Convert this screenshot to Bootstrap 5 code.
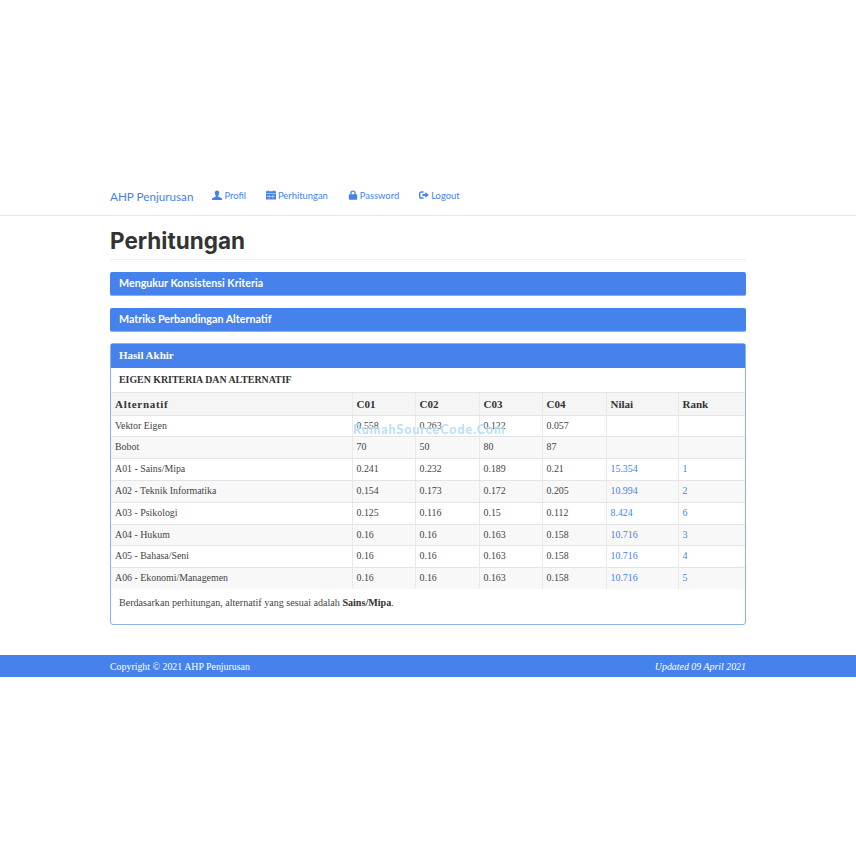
<!DOCTYPE html>
<html lang="en">
<head>
  <meta charset="UTF-8" />
  <meta name="viewport" content="width=device-width, initial-scale=1.0"/>
  <title>AHP Penjurusan</title>
  <link href="https://cdn.jsdelivr.net/npm/bootstrap@5.3.2/dist/css/bootstrap.min.css" rel="stylesheet">
  <style>
    body { padding-top: 180px; font-family: "Liberation Serif", serif; font-size: 10px; color: #444; background: #fff; }
    .wrap { width: 636px; margin-left: 110px; }
    .top-bar { height: 36px; border-bottom: 1px solid #e7e7e7; font-family: Lato, sans-serif; }
    .top-bar .wrap { margin-bottom: 2px; }
    .brand { font-size: 11.7px; color: #4582ec; margin-right: 19px; }
    .nav-item-link { font-size: 9.4px; color: #4582ec; margin-right: 20px; text-decoration: none; gap: 2px; }
    .nav-item-link svg { fill: #4582ec; width: 10px; height: 10px; margin-bottom: 2px; }
    .page-title { font-family: Inter, sans-serif; font-weight: 700; font-size: 22.5px; line-height: 26px; color: #333; margin: 12px 0 0; padding-bottom: 5px; border-bottom: 1px solid #eee; }
    .bar-panel { height: 24px; background: #4582ec; border-radius: 2px; border-bottom: 1px solid #8aafef; color: #fff; font-family: Lato, sans-serif; font-weight: 700; font-size: 10.7px; padding-left: 9px; line-height: 22px; }
    .first-bar { margin-top: 12px; }
    .next-bar { margin-top: 12px; }
    .result-panel { margin-top: 11px; border: 1px solid #8cb0ec; border-radius: 3px; height: 282px; position: relative; }
    .result-head { height: 24px; background: #4582ec; color: #fff; font-weight: 700; font-size: 11px; line-height: 23px; padding-left: 8px; }
    .result-title { height: 24px; line-height: 23px; padding-left: 8px; font-weight: 700; color: #333; font-size: 9.9px; }
    .calc-table { table-layout: fixed; width: 634px; margin: 0; font-size: 9.9px; color: #444; border-collapse: collapse; }
    .calc-table th, .calc-table td { height: 21.8px; padding: 0 4px; border-top: 1px solid #e4e4e4; border-bottom: 0; border-left: 1px solid #e9e9e9; vertical-align: middle; background: transparent; box-shadow: none; }
    .calc-table th:first-child, .calc-table td:first-child { border-left: 0; }
    .calc-table th { color: #333; font-weight: 700; font-size: 11px; }
    .calc-table th:first-child { letter-spacing: .7px; }
    .calc-table tbody tr:nth-child(even) td { background: #f8f8f8; }
    .calc-table thead th { background: #f5f5f5; height: 22.6px; }
    .calc-table a { color: #4582ec; text-decoration: none; }
    .w-main { width: 241px; }
    .w-c1 { width: 63px; }
    .w-c2 { width: 64px; }
    .w-c3 { width: 63px; }
    .w-c4 { width: 64px; }
    .w-nilai { width: 72px; }
    .w-rank { width: 67px; }
    .conclusion { padding: 6px 8px 0; margin: 0; font-size: 10.1px; }
    .conclusion strong { color: #333; }
    .stamp { position: absolute; left: 242px; top: 77px; font-family: Lato, sans-serif; font-weight: 700; font-size: 12.5px; letter-spacing: .95px; color: rgba(130, 200, 240, .6); text-shadow: 0 0 1px #fff; pointer-events: none; }
    .foot-bar { margin-top: 30px; height: 22px; background: #4582ec; color: #fff; line-height: 24px; font-size: 9.9px; }
    .foot-bar .wrap em { font-weight: 400; }
  </style>
</head>
<body>

  <nav class="top-bar d-flex align-items-center">
    <div class="wrap d-flex align-items-center">
      <span class="brand">AHP Penjurusan</span>
      <a class="nav-item-link d-inline-flex align-items-center" href="#">
        <svg viewBox="0 0 12 12"><path d="M6 0.5c1.7 0 2.7 1.3 2.7 3.100 0 1.200-.5 2.300-1.200 3v1.100l3.300 1.500c.6.3 1.200.8 1.200 1.400v1.400H0v-1.400c0-.6.6-1.100 1.200-1.400l3.300-1.500V6.600c-.7-.7-1.200-1.800-1.200-3C3.300 1.800 4.300.5 6 .5z"/></svg>Profil</a>
      <a class="nav-item-link d-inline-flex align-items-center" href="#">
        <svg viewBox="0 0 12 12"><path d="M0 1.500h2V.5h1.500v1h5V.5H10v1h2V4.200H0zM0 4.900h12v6.600H0zM3.400 6v1.500h.7V6zm4.500 0v1.500h.7V6zM.9 7.900v.6h10.200v-.6zM3.400 9v1.500h.7V9zm4.500 0v1.500h.7V9z" fill-rule="evenodd"/></svg>Perhitungan</a>
      <a class="nav-item-link d-inline-flex align-items-center" href="#">
        <svg viewBox="0 0 12 12"><path d="M6 .5c2 0 3.300 1.400 3.300 3.300V5.200h1c.4 0 .7.300.7.700v5c0 .4-.3.700-.7.700H1.700c-.4 0-.7-.3-.7-.7v-5c0-.4.300-.7.700-.7h1V3.800C2.700 1.900 4 .5 6 .5zM4.300 5.200h3.400V3.800C7.700 2.800 7 2 6 2s-1.700.8-1.700 1.800z" fill-rule="evenodd"/></svg>Password</a>
      <a class="nav-item-link d-inline-flex align-items-center" href="#">
        <svg viewBox="0 0 12 12"><path d="M5.500 1.500v1.700H3c-.8 0-1.300.5-1.300 1.300v3c0 .8.500 1.300 1.300 1.300h2.500v1.700H2.800C1.200 10.500 0 9.300 0 7.700V4.300C0 2.700 1.200 1.500 2.800 1.500zM7.500 2.800 12 6l-4.500 3.200V7.300H4V4.700h3.500z"/></svg>Logout</a>
    </div>
  </nav>

  <main class="wrap">
    <h1 class="page-title">Perhitungan</h1>

    <div class="bar-panel first-bar">Mengukur Konsistensi Kriteria</div>
    <div class="bar-panel next-bar">Matriks Perbandingan Alternatif</div>

    <section class="result-panel">
      <div class="result-head">Hasil Akhir</div>
      <div class="result-title">EIGEN KRITERIA DAN ALTERNATIF</div>
      <table class="table calc-table">
        <colgroup>
          <col class="w-main"><col class="w-c1"><col class="w-c2"><col class="w-c3"><col class="w-c4"><col class="w-nilai"><col class="w-rank">
        </colgroup>
        <thead>
          <tr><th>Alternatif</th><th>C01</th><th>C02</th><th>C03</th><th>C04</th><th>Nilai</th><th>Rank</th></tr>
        </thead>
        <tbody>
          <tr><td>Vektor Eigen</td><td>0.558</td><td>0.263</td><td>0.122</td><td>0.057</td><td></td><td></td></tr>
          <tr><td>Bobot</td><td>70</td><td>50</td><td>80</td><td>87</td><td></td><td></td></tr>
          <tr><td>A01 - Sains/Mipa</td><td>0.241</td><td>0.232</td><td>0.189</td><td>0.21</td><td><a href="#">15.354</a></td><td><a href="#">1</a></td></tr>
          <tr><td>A02 - Teknik Informatika</td><td>0.154</td><td>0.173</td><td>0.172</td><td>0.205</td><td><a href="#">10.994</a></td><td><a href="#">2</a></td></tr>
          <tr><td>A03 - Psikologi</td><td>0.125</td><td>0.116</td><td>0.15</td><td>0.112</td><td><a href="#">8.424</a></td><td><a href="#">6</a></td></tr>
          <tr><td>A04 - Hukum</td><td>0.16</td><td>0.16</td><td>0.163</td><td>0.158</td><td><a href="#">10.716</a></td><td><a href="#">3</a></td></tr>
          <tr><td>A05 - Bahasa/Seni</td><td>0.16</td><td>0.16</td><td>0.163</td><td>0.158</td><td><a href="#">10.716</a></td><td><a href="#">4</a></td></tr>
          <tr><td>A06 - Ekonomi/Managemen</td><td>0.16</td><td>0.16</td><td>0.163</td><td>0.158</td><td><a href="#">10.716</a></td><td><a href="#">5</a></td></tr>
        </tbody>
      </table>
      <p class="conclusion">Berdasarkan perhitungan, alternatif yang sesuai adalah <strong>Sains/Mipa</strong>.</p>
      <span class="stamp">RumahSourceCode.Com</span>
    </section>
  </main>

  <footer class="foot-bar">
    <div class="wrap d-flex justify-content-between">
      <span>Copyright © 2021 AHP Penjurusan</span>
      <em>Updated 09 April 2021</em>
    </div>
  </footer>

  <script src="https://cdn.jsdelivr.net/npm/bootstrap@5.3.2/dist/js/bootstrap.bundle.min.js"></script>
</body>
</html>
